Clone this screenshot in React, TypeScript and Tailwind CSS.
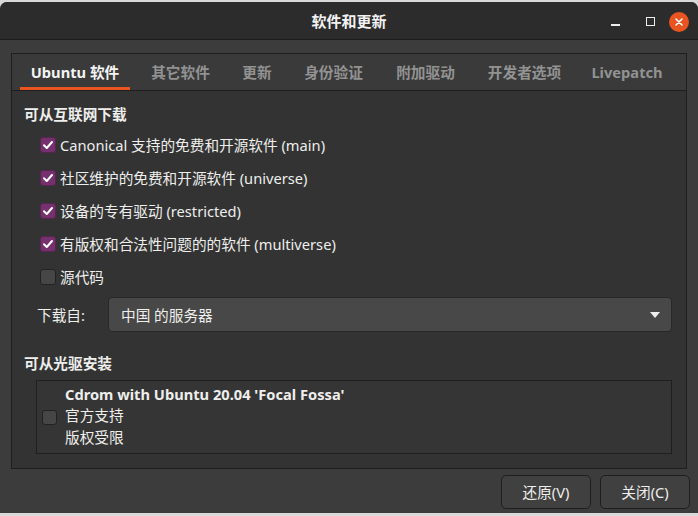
import React from "react";

const font = { fontFamily: '"Noto Sans", "Noto Sans CJK SC", sans-serif' };

function Check({ checked, size = 16 }: { checked: boolean; size?: number }) {
  return (
    <div
      className={
        "shrink-0 flex items-center justify-center rounded-[3px] border " +
        (checked ? "bg-[#77306e] border-[#5a2354]" : "bg-[#464646] border-[#222222]")
      }
      style={{ width: size, height: size }}
    >
      {checked && (
        <svg width="12" height="12" viewBox="0 0 12 12">
          <path d="M2 6.2 L4.8 9 L10 3" fill="none" stroke="#ffffff" strokeWidth="2" strokeLinecap="round" strokeLinejoin="round" />
        </svg>
      )}
    </div>
  );
}

const rows: { label: string; checked: boolean }[] = [
  { label: "Canonical 支持的免费和开源软件 (main)", checked: true },
  { label: "社区维护的免费和开源软件 (universe)", checked: true },
  { label: "设备的专有驱动 (restricted)", checked: true },
  { label: "有版权和合法性问题的的软件 (multiverse)", checked: true },
  { label: "源代码", checked: false },
];

const tabs: { label: string; w: string }[] = [
  { label: "其它软件", w: "w-[83px]" },
  { label: "更新", w: "w-[52px]" },
  { label: "身份验证", w: "w-[83px]" },
  { label: "附加驱动", w: "w-[83px]" },
  { label: "开发者选项", w: "w-[97px]" },
  { label: "Livepatch", w: "w-[90px]" },
];

export default function App() {
  return (
    <div className="w-[698px] h-[516px] bg-[#d9d9d9] overflow-hidden text-[14.67px] text-[#eeeeec]" style={font}>
      <div className="mt-[2px] h-[511px] rounded-t-[7px] bg-[#3c3c3c] flex flex-col overflow-hidden">
        {/* title bar */}
        <div className="h-[38px] shrink-0 bg-[#2c2c2c] border-b border-[#1c1c1c] grid grid-cols-[1fr_auto_1fr] items-center">
          <div />
          <div className="font-bold text-[15px] text-[#f2f2f2] pt-[2px]">软件和更新</div>
          <div className="flex items-center justify-end pr-[9px] pt-[2px]">
            <div className="w-[32px] h-[20px] flex items-center justify-center">
              <div className="w-[9px] h-[2px] bg-[#eeeeee] mt-[6px]" />
            </div>
            <div className="w-[32px] h-[20px] flex items-center justify-center ml-[3px]">
              <div className="w-[9px] h-[9px] border-[1.5px] border-[#eeeeee]" />
            </div>
            <div className="w-[20px] h-[20px] rounded-full bg-[#e95420] flex items-center justify-center ml-[3px]">
              <svg width="8" height="8" viewBox="0 0 8 8">
                <path d="M1 1 L7 7 M7 1 L1 7" stroke="#ffffff" strokeWidth="1.6" strokeLinecap="round" />
              </svg>
            </div>
          </div>
        </div>

        {/* body */}
        <div className="flex-1 flex flex-col px-[11px] pt-[13px]">
          <div className="h-[416px] border border-[#1f1f1f] flex flex-col">
            {/* tabs */}
            <div className="h-[37px] shrink-0 bg-[#3a3a3a] border-b border-[#1f1f1f] flex items-stretch pl-[8px] gap-[9px] font-bold whitespace-nowrap">
              <div className="relative w-[110px] shrink-0 flex items-center justify-center text-[#f4f4f4]">
                Ubuntu 软件
                <div className="absolute left-0 right-0 bottom-0 h-[3px] bg-[#e95420]" />
              </div>
              {tabs.map((t) => (
                <div key={t.label} className={t.w + " shrink-0 flex items-center justify-center text-[#929292]"}>
                  {t.label}
                </div>
              ))}
            </div>

            {/* content */}
            <div className="flex-1 bg-[#333333] flex flex-col pl-[12px] pr-[14px]">
              <div className="mt-[13px] h-[20px] flex items-center font-bold">可从互联网下载</div>
              <div className="mt-[4px] flex flex-col pl-[16px]">
                {rows.map((r) => (
                  <div key={r.label} className="h-[33px] flex items-center gap-[4px] whitespace-nowrap">
                    <Check checked={r.checked} />
                    <span>{r.label}</span>
                  </div>
                ))}
              </div>
              <div className="mt-[4px] h-[35px] flex items-center">
                <div className="w-[84px] pl-[13px] whitespace-nowrap">下载自:</div>
                <div className="flex-1 h-[35px] rounded-[4px] bg-[#484848] border border-[#282828] flex items-center pl-[12px] pr-[11px]">
                  <span className="flex-1">中国 的服务器</span>
                  <svg width="10" height="6" viewBox="0 0 10 6">
                    <path d="M0 0 H10 L5 6 Z" fill="#eeeeee" />
                  </svg>
                </div>
              </div>
              <div className="mt-[21px] h-[20px] flex items-center font-bold">可从光驱安装</div>
              <div className="mt-[7px] ml-[12px] h-[74px] border border-[#1f1f1f] bg-[#353535] flex items-center pl-[5px]">
                <Check checked={false} size={15} />
                <div className="ml-[8px] flex flex-col whitespace-nowrap -mt-[3px]">
                  <div className="h-[21px] flex items-center font-bold">Cdrom with Ubuntu 20.04 'Focal Fossa'</div>
                  <div className="h-[22px] flex items-center">官方支持</div>
                  <div className="h-[22px] flex items-center">版权受限</div>
                </div>
              </div>
            </div>
          </div>

          {/* buttons */}
          <div className="mt-[6px] flex justify-end gap-[9px] -mr-[3px]">
            <div className="w-[90px] h-[34px] rounded-[5px] bg-[#404040] border border-[#1e1e1e] flex items-center justify-center">
              还原(V)
            </div>
            <div className="w-[90px] h-[34px] rounded-[5px] bg-[#404040] border border-[#1e1e1e] flex items-center justify-center">
              关闭(C)
            </div>
          </div>
        </div>
      </div>
    </div>
  );
}
